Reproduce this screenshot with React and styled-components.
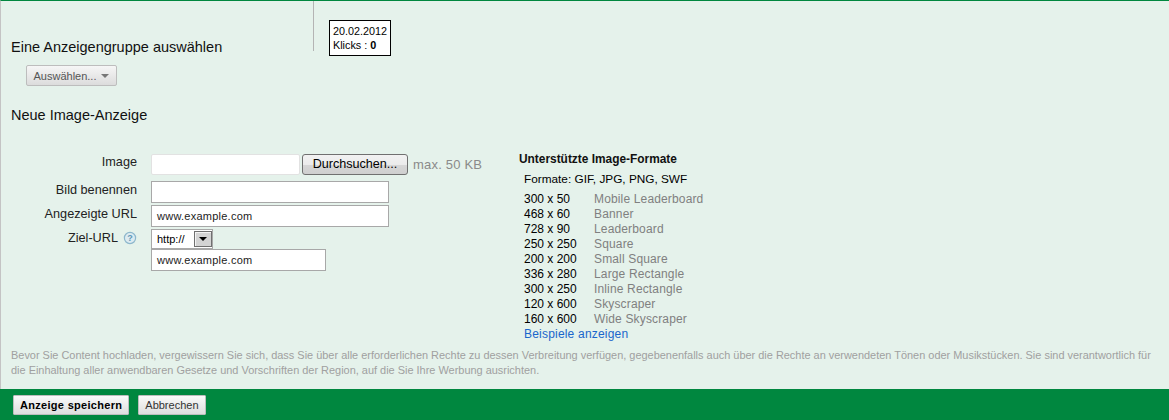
import { createGlobalStyle } from 'styled-components';
import styled from 'styled-components';

const formats = [
    ['300 x 50', 'Mobile Leaderboard'],
    ['468 x 60', 'Banner'],
    ['728 x 90', 'Leaderboard'],
    ['250 x 250', 'Square'],
    ['200 x 200', 'Small Square'],
    ['336 x 280', 'Large Rectangle'],
    ['300 x 250', 'Inline Rectangle'],
    ['120 x 600', 'Skyscraper'],
    ['160 x 600', 'Wide Skyscraper'],
];

function App() {
    return (
        <>
            <GlobalStyle />
            <Page>
                <Main>
                    <TopRow>
                        <GroupHeading>
                            <Heading>Eine Anzeigengruppe auswählen</Heading>
                        </GroupHeading>
                        <ChartTip>
                            <div>20.02.2012</div>
                            <div>
                                Klicks : <b>0</b>
                            </div>
                        </ChartTip>
                    </TopRow>
                    <GroupButton>
                        Auswählen...
                        <Caret />
                    </GroupButton>
                    <Heading as="h2">Neue Image-Anzeige</Heading>
                    <Columns>
                        <Form>
                            <Row $height={27}>
                                <Label>Image</Label>
                                <FileInput />
                                <BrowseButton>Durchsuchen...</BrowseButton>
                                <Hint>max. 50 KB</Hint>
                            </Row>
                            <Row $height={24}>
                                <Label $inset>Bild benennen</Label>
                                <TextBox $width={238} />
                            </Row>
                            <Row $height={24}>
                                <Label $inset>Angezeigte URL</Label>
                                <TextBox $width={238}>www.example.com</TextBox>
                            </Row>
                            <Row $height={20}>
                                <Label $inset>
                                    Ziel-URL
                                    <HelpIcon width="14" height="14" viewBox="0 0 14 14">
                                        <circle cx="7" cy="7" r="5.6" fill="#dcebf1" stroke="#8db7cc" strokeWidth="1.2" />
                                        <text x="7" y="10.2" textAnchor="middle" fontSize="9" fontWeight="700" fontFamily="Liberation Sans" fill="#5f97b5">?</text>
                                    </HelpIcon>
                                </Label>
                                <SelectBox>
                                    http://
                                    <SelectArrow>
                                        <Caret $dark />
                                    </SelectArrow>
                                </SelectBox>
                            </Row>
                            <Row $height={24}>
                                <Label />
                                <TextBox $width={175}>www.example.com</TextBox>
                            </Row>
                        </Form>
                        <Formats>
                            <FormatsTitle>Unterstützte Image-Formate</FormatsTitle>
                            <FormatsList>
                                <FormatTypes>Formate: GIF, JPG, PNG, SWF</FormatTypes>
                                {formats.map(([size, name]) => (
                                    <FormatRow key={size + name}>
                                        <FormatSize>{size}</FormatSize>
                                        <FormatName>{name}</FormatName>
                                    </FormatRow>
                                ))}
                                <ExamplesLink href="#">Beispiele anzeigen</ExamplesLink>
                            </FormatsList>
                        </Formats>
                    </Columns>
                    <Disclaimer>
                        Bevor Sie Content hochladen, vergewissern Sie sich, dass Sie über alle erforderlichen Rechte zu dessen Verbreitung verfügen, gegebenenfalls auch über die Rechte an verwendeten Tönen oder Musikstücken. Sie sind verantwortlich für die Einhaltung aller anwendbaren Gesetze und Vorschriften der Region, auf die Sie Ihre Werbung ausrichten.
                    </Disclaimer>
                </Main>
                <Footer>
                    <FooterButton $primary>Anzeige speichern</FooterButton>
                    <FooterButton>Abbrechen</FooterButton>
                </Footer>
            </Page>
        </>
    );
}

const GlobalStyle = createGlobalStyle`
    html, body {
        margin: 0;
        padding: 0;
        background: #e5f2eb;
    }
    body {
        font-family: "Liberation Sans", Arial, sans-serif;
        color: #000;
    }
`;
const Page = styled.div`
    width: 1169px;
    height: 420px;
    display: flex;
    flex-direction: column;
    overflow: hidden;
`;
const Main = styled.div`
    flex: 1;
    box-sizing: border-box;
    border-top: 1px solid #00873f;
    border-left: 1px solid #c4c4c4;
    padding-left: 10px;
`;
const TopRow = styled.div`
    display: flex;
    height: 55px;
`;
const GroupHeading = styled.div`
    width: 303px;
    height: 50px;
    box-sizing: border-box;
    border-right: 1px solid #b4b4b4;
    padding-top: 37px;
`;
const Heading = styled.h2`
    margin: 0;
    font-size: 14.5px;
    line-height: 18px;
    font-weight: 400;
    color: #111;
`;
const ChartTip = styled.div`
    margin: 19px 0 0 15px;
    width: 62px;
    height: 36px;
    box-sizing: border-box;
    border: 1px solid #000;
    background: #fff;
    padding: 3px;
    font-size: 10.8px;
    line-height: 14px;
    white-space: nowrap;
`;
const GroupButton = styled.div`
    margin: 9px 0 20px 15px;
    width: 91px;
    height: 21px;
    box-sizing: border-box;
    border: 1px solid #bdbdbd;
    border-radius: 2px;
    background: linear-gradient(#f6f6f6, #dcdcdc);
    color: #555;
    font-size: 11px;
    display: flex;
    align-items: center;
    justify-content: center;
    gap: 5px;
`;
const Caret = styled.span`
    width: 0;
    height: 0;
    border-left: 4px solid transparent;
    border-right: 4px solid transparent;
    border-top: 4px solid ${(p) => (p.$dark ? '#000' : '#777')};
`;
const Columns = styled.div`
    display: flex;
    margin-top: 30px;
`;
const Form = styled.div`
    width: 509px;
`;
const Row = styled.div`
    display: flex;
    height: ${(p) => p.$height}px;
    font-size: 12px;
`;
const Label = styled.div`
    width: 126px;
    margin-right: 14px;
    padding-top: ${(p) => (p.$inset ? 1 : 0)}px;
    font-size: 12.7px;
    line-height: 16px;
    color: #222;
    text-align: right;
    display: flex;
    justify-content: flex-end;
    align-items: flex-start;
    gap: 5px;
`;
const FileInput = styled.div`
    width: 149px;
    height: 21px;
    box-sizing: border-box;
    background: #fff;
    border: 1px solid #e2e2e2;
    border-radius: 2px;
`;
const BrowseButton = styled.div`
    margin-left: 2px;
    width: 106px;
    height: 21px;
    box-sizing: border-box;
    border: 1px solid #707070;
    border-radius: 3px;
    background: linear-gradient(#f2f2f2 0%, #ebebeb 50%, #d6d6d6 55%, #cfcfcf 100%);
    font-size: 12.6px;
    line-height: 19px;
    text-align: center;
    color: #000;
`;
const Hint = styled.span`
    margin-left: 5px;
    font-size: 13px;
    letter-spacing: 0.2px;
    line-height: 21px;
    color: #8a8a8a;
`;
const TextBox = styled.div`
    width: ${(p) => p.$width}px;
    height: 22px;
    box-sizing: border-box;
    background: #fff;
    border: 1px solid #a8a8a8;
    padding-left: 5px;
    font-size: 11px;
    line-height: 20px;
    letter-spacing: 0.25px;
    color: #222;
`;
const HelpIcon = styled.svg`
    flex: none;
    margin-top: 1px;
`;
const SelectBox = styled.div`
    width: 62px;
    height: 20px;
    box-sizing: border-box;
    background: #fff;
    border: 1px solid #a8a8a8;
    padding-left: 5px;
    font-size: 11px;
    line-height: 18px;
    position: relative;
`;
const SelectArrow = styled.span`
    position: absolute;
    right: 0;
    top: 1px;
    width: 18px;
    height: 16px;
    box-sizing: border-box;
    border: 1px solid #707070;
    box-shadow: inset 1px 1px 0 #f4f4f4;
    background: #d4d4d4;
    display: flex;
    align-items: center;
    justify-content: center;
`;
const Formats = styled.div`
    font-size: 12px;
`;
const FormatsTitle = styled.div`
    font-weight: 700;
    font-size: 11.9px;
    line-height: 15px;
    margin-top: -2px;
    margin-left: -1px;
    color: #111;
`;
const FormatsList = styled.div`
    padding-left: 4px;
`;
const FormatTypes = styled.div`
    font-size: 11.8px;
    line-height: 15px;
    margin: 5px 0 5px;
`;
const FormatRow = styled.div`
    display: flex;
    font-size: 12px;
    line-height: 15px;
`;
const FormatSize = styled.span`
    width: 70px;
`;
const FormatName = styled.span`
    color: #808080;
    letter-spacing: 0.15px;
`;
const ExamplesLink = styled.a`
    display: block;
    font-size: 12px;
    letter-spacing: 0.2px;
    line-height: 15px;
    color: #1a66cc;
    text-decoration: none;
`;
const Disclaimer = styled.p`
    margin: 6px 0 0;
    width: 1148px;
    font-size: 10.94px;
    line-height: 15px;
    color: #a0a0a0;
`;
const Footer = styled.div`
    height: 31px;
    flex: none;
    background: #00873f;
    display: flex;
    align-items: center;
    gap: 9px;
    padding: 0 0 0 13px;
`;
const FooterButton = styled.div`
    height: 20px;
    box-sizing: border-box;
    padding: 0 6px;
    border: 1px solid #bdbdbd;
    border-radius: 1px;
    background: linear-gradient(#fafafa, #dedede);
    font-size: 11px;
    line-height: 18px;
    letter-spacing: ${(p) => (p.$primary ? '0.3px' : '0')};
    font-weight: ${(p) => (p.$primary ? 700 : 400)};
    color: ${(p) => (p.$primary ? '#000' : '#333')};
`;
export default App;
